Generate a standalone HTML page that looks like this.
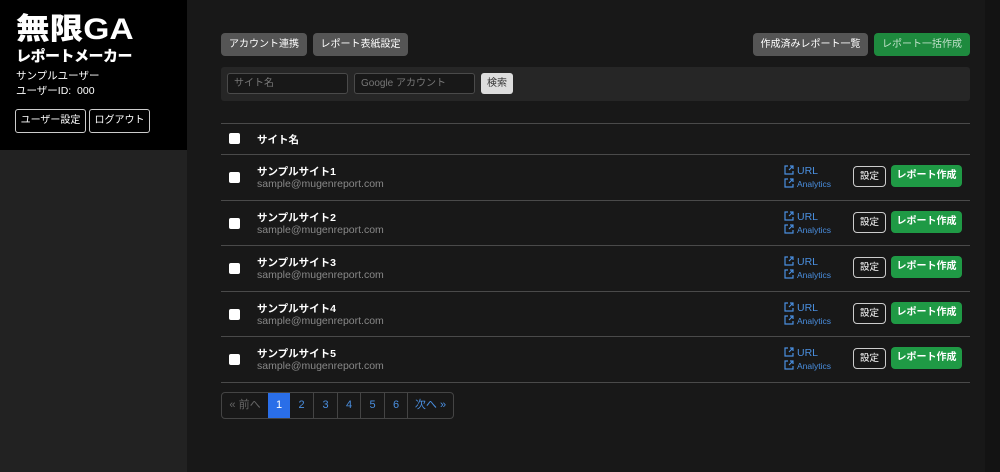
<!DOCTYPE html><html><head><meta charset="utf-8"><style>
*{box-sizing:border-box;margin:0;padding:0}
body{width:1000px;height:472px;background:#181818;font-family:"Liberation Sans","Noto Sans CJK JP",sans-serif;color:#fff;position:relative;overflow:hidden}
.side{position:absolute;left:0;top:0;width:187px;height:472px;background:#222}
.sideTop{position:absolute;left:0;top:0;width:187px;height:150px;background:#000}
.logo{position:absolute;left:16px;top:14px;font-size:30px;font-weight:900;line-height:32px;transform:scaleX(1.12);transform-origin:left}
.logo2{position:absolute;left:16px;top:47px;font-size:15px;font-weight:900;line-height:20px;letter-spacing:-0.5px}
.st{position:absolute;left:16px;font-size:10.5px;line-height:14px}
.ob{position:absolute;top:109px;height:24px;border:1px solid #ccc;border-radius:3px;font-size:10px;line-height:22px;text-align:center;color:#fff}
.btn{position:absolute;top:33px;height:23px;border-radius:4px;font-size:10px;line-height:23px;text-align:center;color:#fff;background:#555}
.sbar{position:absolute;left:221px;top:67px;width:749px;height:34px;background:#262626;border-radius:3px}
.inp{position:absolute;top:73px;height:21px;border:1px solid #4a4a4a;border-radius:3px;background:#181818;color:#777;font-size:10px;line-height:19px;padding-left:6px}
.line{position:absolute;left:221px;width:749px;height:1px;background:#4a4a4a}
.cb{position:absolute;left:229px;width:11px;height:11px;background:#fff;border-radius:2px}
.nm{position:absolute;left:257px;font-size:10.5px;font-weight:bold}
.em{position:absolute;left:257px;font-size:10.5px;color:#888}
.lk{position:absolute;left:784px;color:#4a8fe0;font-size:10.5px;line-height:12px}
.lk svg{vertical-align:-1px;margin-right:3px}
.set{position:absolute;left:853px;width:33px;height:21px;border:1px solid #ccc;border-radius:4px;font-size:9.5px;line-height:19px;text-align:center}
.gr{position:absolute;left:891px;width:71px;height:22px;background:#1f9a45;border-radius:4px;font-size:10px;line-height:22px;text-align:center;font-weight:bold}
.pg{position:absolute;top:392px;left:221px;height:27px;display:flex;border:1px solid #444;border-radius:4px;overflow:hidden}
.pg div{height:25px;line-height:25px;font-size:11px;color:#4a8fe0;text-align:center;border-left:1px solid #444}
</style></head><body>
<div class="side"></div><div class="sideTop"></div>
<div class="logo">無限GA</div>
<div class="logo2">レポートメーカー</div>
<div class="st" style="top:69px">サンプルユーザー</div>
<div class="st" style="top:84px">ユーザーID:&nbsp; 000</div>
<div class="ob" style="left:15px;width:71px">ユーザー設定</div>
<div class="ob" style="left:89px;width:61px">ログアウト</div>
<div style="position:absolute;left:985px;top:0;width:15px;height:472px;background:#131313"></div>
<div class="btn" style="left:221px;width:86px">アカウント連携</div>
<div class="btn" style="left:313px;width:95px">レポート表紙設定</div>
<div class="btn" style="left:753px;width:115px">作成済みレポート一覧</div>
<div class="btn" style="left:874px;width:96px;background:#1e8a3e;color:#bfe0c8">レポート一括作成</div>
<div class="sbar"></div>
<div class="inp" style="left:227px;width:121px">サイト名</div>
<div class="inp" style="left:354px;width:121px">Google アカウント</div>
<div style="position:absolute;left:481px;top:73px;width:32px;height:21px;background:#ddd;border-radius:3px;color:#333;font-size:10px;line-height:21px;text-align:center">検索</div>
<div class="line" style="top:123px"></div>
<div class="cb" style="top:133px"></div>
<div class="nm" style="top:132px">サイト名</div>
<div class="line" style="top:154px"></div>
<div id="rows"></div>
<div class="pg">
<div style="width:46px;color:#666;border-left:none">« 前へ</div>
<div style="width:22px;background:#2a6ee8;color:#fff;border-left:none">1</div>
<div style="width:23px;border-left:none">2</div><div style="width:24px">3</div><div style="width:23px">4</div><div style="width:24px">5</div><div style="width:23px">6</div><div style="width:46px">次へ »</div>
</div>
<script>
var h='',ic='<svg width="10" height="10" viewBox="0 0 10 10" fill="none" stroke="#4a8fe0" stroke-width="1.2"><path d="M4 1H1v8h8V6M5 5l4-4M6 1h3v3"/></svg>';
for(var i=0;i<5;i++){var t=154+i*45.5;
h+='<div class="cb" style="top:'+(t+18)+'px"></div><div class="nm" style="top:'+(t+10)+'px">サンプルサイト'+(i+1)+'</div><div class="em" style="top:'+(t+24)+'px">sample@mugenreport.com</div>'+
'<div class="lk" style="top:'+(t+11)+'px">'+ic+'URL</div><div class="lk" style="top:'+(t+24)+'px;font-size:8.5px">'+ic+'Analytics</div>'+
'<div class="set" style="top:'+(t+12)+'px">設定</div><div class="gr" style="top:'+(t+11)+'px">レポート作成</div>'+
'<div class="line" style="top:'+(t+45.5)+'px"></div>';}
document.getElementById('rows').outerHTML=h;
</script>
</body></html>
